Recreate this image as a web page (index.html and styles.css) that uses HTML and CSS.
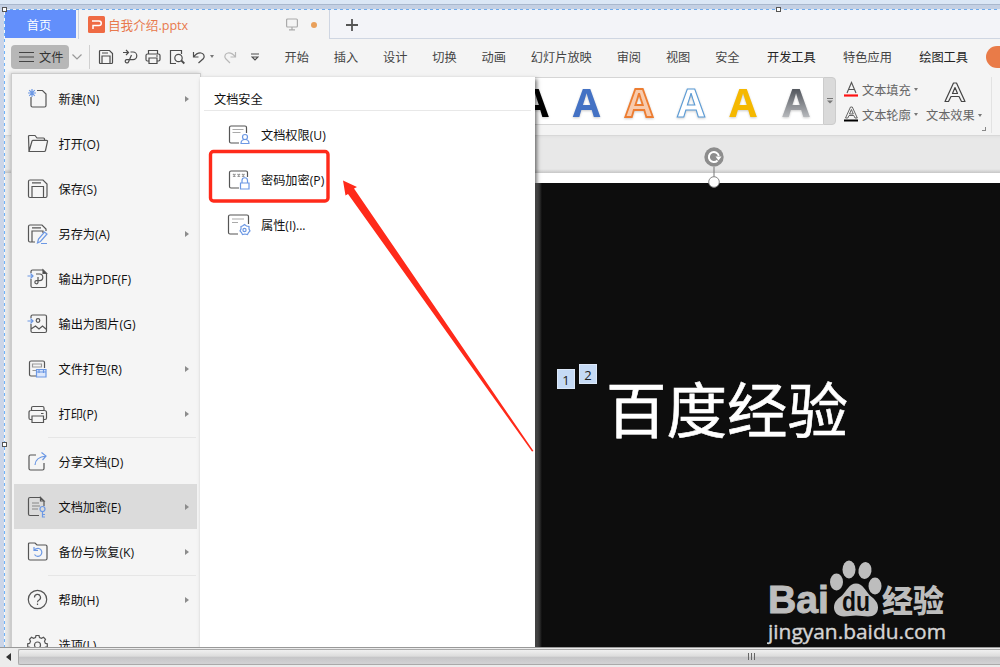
FILE: index.html
```
<!DOCTYPE html>
<html lang="zh-CN">
<head>
  <meta charset="utf-8">
  <title>自我介绍.pptx</title>
  <link rel="stylesheet" href="styles.css">
</head>
<body>

<div class="app">
  <div class="window">

    <div class="tabs">
      <div class="tab-home">首页</div>
      <div class="tab-doc">
        <svg class="logo" width="17" height="17" viewBox="0 0 17 17"><rect width="17" height="17" rx="1.5" fill="#ef6a43"/><path d="M4 5h7a2 2 0 0 1 0 4.500H5V13" fill="none" stroke="#fff" stroke-width="1.5"/></svg>
        <span class="name">自我介绍.pptx</span>
        <svg width="12" height="13" viewBox="0 0 12 13" fill="none" stroke="#aaa" stroke-width="1.2"><rect x=".6" y="1" width="10.8" height="8" rx="1"/><path d="M6 9v2.500M3 11.800h6"/></svg>
        <i class="dot"></i>
      </div>
      <div class="tab-new"><svg width="12" height="12" viewBox="0 0 12 12" stroke="#555" stroke-width="1.8"><path d="M6 0v12M0 6h12"/></svg></div>
    </div>

    <div class="toolbar">
      <div class="file-btn">
        <svg width="15" height="12" viewBox="0 0 15 12" stroke="#444" stroke-width="1.1"><path d="M0 1.500h15M0 6h15M0 10.500h15"/></svg>
        文件
      </div>
      <svg class="chev" width="10" height="6" viewBox="0 0 10 6" fill="none" stroke="#999" stroke-width="1.2"><path d="M.5.5L5 5 9.500.5"/></svg>
      <div class="quick">
        <svg width="16" height="16" viewBox="0 0 16 16"><path d="M1.500 2.500q0-1 1-1h9l3 3v9q0 1-1 1h-11q-1 0-1-1zM4 14V7h8v7M4 4h6"/></svg>
        <svg width="16" height="16" viewBox="0 0 16 16"><path d="M1 3.500h5.500M4 1l2.500 2.500L4 6M8.500 3h2.500a3.800 3.800 0 0 1 0 7.600H4.500a1.700 1.700 0 1 0 2 2.300L9.500 6"/></svg>
        <svg width="16" height="16" viewBox="0 0 16 16"><path d="M3.500 5V1.500h9V5M3.500 12H2.500q-1.500 0-1.500-1.500v-4Q1 5 2.500 5h11Q15 5 15 6.500v4q0 1.500-1.500 1.500h-1M4 9h8v5.500H4zM11 7h2"/></svg>
        <svg width="16" height="16" viewBox="0 0 16 16"><path d="M7 14.500H1.500v-13h11V5"/><circle cx="9.500" cy="9" r="3.700"/><path d="M12.300 11.500l3 3" stroke-width="1.800"/></svg>
        <svg width="14" height="14" viewBox="0 0 14 14"><path d="M1.500 2v5h5M1.500 7Q5 2.500 9 3a3.500 3.500 0 0 1 2.500 5.500L6.500 13"/></svg>
        <i class="caret"></i>
        <svg class="redo" width="14" height="14" viewBox="0 0 14 14"><path d="M12.500 2v5h-5M12.500 7Q9 2.500 5 3a3.500 3.500 0 0 0-2.500 5.500L7 13"/></svg>
        <svg class="more" width="8" height="8" viewBox="0 0 8 8"><path d="M0 1h8M1 4h6L4 7z"/></svg>
      </div>
      <div class="menus">
        <span>开始</span><span>插入</span><span>设计</span><span>切换</span><span>动画</span><span>幻灯片放映</span><span>审阅</span><span>视图</span><span>安全</span>
        <span class="strong wide">开发工具</span><span class="wide">特色应用</span><span class="strong wide">绘图工具</span>
      </div>
      <div class="pill"></div>
    </div>

    <div class="ribbon">
      <svg class="gallery" width="315" height="48" viewBox="0 0 315 48">
        <defs>
          <linearGradient id="gray" x1="0" y1="0" x2="0" y2="1"><stop offset=".3" stop-color="#555960"/><stop offset=".8" stop-color="#b8babd"/></linearGradient>
        </defs>
        <path d="M0 .5h315M0 47.500h315" stroke="#d5d5d5"/>
        <g class="art" text-anchor="middle">
          <text x="27" y="39.500" fill="#000">A</text>
          <text x="78.500" y="39.500" fill="#4472c4">A</text>
          <text x="131" y="39.500" fill="#f8cbad" stroke="#ed7d31" stroke-width="1.800">A</text>
          <text x="183" y="39.500" fill="#fff" stroke="#5b9bd5" stroke-width="1.100">A</text>
          <text x="235" y="39.500" fill="#f5b800">A</text>
          <text x="288" y="39.500" fill="url(#gray)">A</text>
        </g>
      </svg>
      <div class="gallery-more"><svg width="6" height="6" viewBox="0 0 6 6"><path d="M0 .5h6" stroke="#777"/><path d="M0 2.500h6L3 5.500z" fill="#777"/></svg></div>
      <div class="text-tools">
        <div class="tool">
          <svg width="15" height="17" viewBox="0 0 15 17"><path d="M3 12L7.500 1.500 12 12M4.500 8.500h6" fill="none" stroke="#555" stroke-width="1.100"/><path d="M0 14.500h14" stroke="#f11" stroke-width="2.200"/></svg>
          文本填充<i class="caret"></i>
        </div>
        <div class="tool">
          <svg width="15" height="17" viewBox="0 0 15 17"><path d="M1.500 12L6.500 1h1.800l5 11H11L9.800 9.500H5L3.800 12zM5.500 8L7.400 3.500 9.300 8z" fill="none" stroke="#555" stroke-width=".9"/><path d="M0 14.500h14" stroke="#000" stroke-width="2"/></svg>
          文本轮廓<i class="caret"></i>
        </div>
      </div>
      <div class="text-effect">
        <svg width="22" height="21" viewBox="0 0 22 21" fill="none" stroke="#444" stroke-width="1.200" stroke-linejoin="round"><path d="M1 19.500L9.500 1h3L21 19.500h-3.500L15 14.500H7L4.500 19.500zM8.500 11.500L11 5.500l2.500 6z"/></svg>
        <span>文本效果<i class="caret"></i></span>
        <i class="corner"></i>
      </div>
    </div>

    <div class="stage">
      <div class="slide">
        <span class="ph one">1</span>
        <span class="ph two">2</span>
        <div class="title">百度经验</div>
        <svg class="watermark" width="182" height="90" viewBox="0 0 182 90">
          <g fill="#bdbdbd">
            <text class="wm-bai" x="1" y="55.500" textLength="61" lengthAdjust="spacingAndGlyphs">Bai</text>
            <ellipse cx="69.500" cy="25" rx="6.500" ry="8.500"/>
            <ellipse cx="82" cy="12.500" rx="6.500" ry="9"/>
            <ellipse cx="98" cy="13.500" rx="6.500" ry="8.500" transform="rotate(10 98 13.500)"/>
            <ellipse cx="108" cy="29" rx="6.500" ry="8.500"/>
            <path d="M89 26.500c7 0 9 7 14 12 5 4 8 7 8 12 0 6-4 9-10 9-5 0-7-1-12-1s-7 1-12 1c-6 0-10-4-10-9 0-6 4-9 8-12 5-5 7-12 14-12z"/>
            <text class="wm-du" x="75" y="54" textLength="28" lengthAdjust="spacingAndGlyphs">du</text>
            <text class="wm-cn" x="115" y="55" textLength="62">经验</text>
            <text class="wm-url" x="1" y="81.500" textLength="178" lengthAdjust="spacingAndGlyphs">jingyan.baidu.com</text>
          </g>
        </svg>
      </div>
      <svg class="rotate" width="20" height="42" viewBox="0 0 20 42">
        <circle cx="10" cy="10" r="9.700" fill="#8d8d8d"/>
        <path d="M13.500 13.500a5 5 0 1 1 1.300-4.500" fill="none" stroke="#fff" stroke-width="2"/><path d="M11.500 9.500H17.500l-3 4z" fill="#fff"/>
        <path d="M10 20v10" stroke="#777"/>
        <circle cx="10" cy="35" r="5.300" fill="#fff" stroke="#888"/>
      </svg>
    </div>

    <div class="file-menu">
      <div class="item">
        <svg width="22" height="22" viewBox="0 0 22 22"><path d="M4 9v8.500q0 1.500 1.500 1.500h12q1.500 0 1.500-1.500V6l-3.500-3.500H10"/><path class="b" d="M5 1v8M1 5h8M2.200 2.200l5.600 5.600M7.800 2.200L2.200 7.800"/></svg>
        新建(N)<i class="arrow"></i>
      </div>
      <div class="item">
        <svg width="22" height="22" viewBox="0 0 22 22"><path d="M2 18.500L1.500 3.500q0-1 1-1H8l2 2.500h6.500q1 0 1 1V7.500M2 18.500L5 8q.300-.7 1-.7h13.500q1.300 0 1 1L18.500 17.500q-.300 1-1.300 1z"/></svg>
        打开(O)
      </div>
      <div class="item">
        <svg width="22" height="22" viewBox="0 0 22 22"><path d="M1.500 3.500q0-1.500 1.500-1.500h13l4 4v12q0 1.500-1.500 1.500H3q-1.500 0-1.500-1.500zM5 19.500V8.500h11.500v11M5 4.800h9"/></svg>
        保存(S)
      </div>
      <div class="item">
        <svg width="22" height="22" viewBox="0 0 22 22"><path d="M8 19H3q-1.500 0-1.500-1.500v-14Q1.500 2 3 2h12l4 4v2M5 19V8h11v2M5 4.800h9"/><path class="b" d="M10.500 20l1-4 6-7 2.500 2-6.500 7.500zM14 20.500h6"/></svg>
        另存为(A)<i class="arrow"></i>
      </div>
      <div class="item">
        <svg width="22" height="22" viewBox="0 0 22 22"><path d="M4 5V3.500Q4 2 5.500 2H16l3.500 3.500V18q0 1.500-1.500 1.500H5.500Q4 19.500 4 18v-7M9 6h3.500a3.300 3.300 0 0 1 0 6.600H9.500a1.600 1.600 0 1 0 1.500 2V9"/><path class="b" d="M.5 8h5M3.500 5.500L6 8l-2.500 2.500"/><path d="M16 2l3.500 3.500H16z" fill="#444"/></svg>
        输出为PDF(F)
      </div>
      <div class="item">
        <svg width="22" height="22" viewBox="0 0 22 22"><path d="M4 5V3.500Q4 2 5.500 2H18q1.500 0 1.500 1.500V18q0 1.500-1.500 1.500H5.500Q4 19.500 4 18v-7M4 16l4.500-3 3.500 3 3.500-3 4 3.500"/><circle cx="11" cy="7.500" r="1.800"/><path class="b" d="M.5 8h5M3.500 5.500L6 8l-2.500 2.500"/></svg>
        输出为图片(G)
      </div>
      <div class="item">
        <svg width="22" height="22" viewBox="0 0 22 22"><path d="M9 18H4q-1.500 0-1.500-1.500v-12Q2.500 3 4 3h12q1.500 0 1.500 1.500V10"/><path d="M5.500 6h9v3h-9zM5.500 12.500H9" stroke="#999"/><path class="b" d="M9.500 11.500h9.500v7.500h-9.500zM9.500 14h9.500M12 11.500V15M16.500 11.500V15" fill="#dce7fb"/></svg>
        文件打包(R)<i class="arrow"></i>
      </div>
      <div class="item">
        <svg width="22" height="22" viewBox="0 0 22 22"><path d="M4.500 7.500V5q0-1.500 1.500-1.500h9.500Q17 3.500 17 5v2.500M5 16.500H3.500q-1.500 0-1.500-1.500V9.500Q2 7.500 4 7.500h13.500q2 0 2 2V15q0 1.500-1.500 1.500h-1.500M5 13h11.500v6.500H5zM14 10.500h2.500"/></svg>
        打印(P)<i class="arrow"></i>
      </div>
      <hr>
      <div class="item">
        <svg width="22" height="22" viewBox="0 0 22 22"><path d="M9 4H3.500Q2 4 2 5.500v12Q2 19 3.500 19h12q1.500 0 1.500-1.500V12"/><path class="b" d="M8 14Q8.500 6 19 5M14.500 1.500L19 5l-3.500 4"/></svg>
        分享文档(D)
      </div>
      <div class="item on">
        <svg width="22" height="22" viewBox="0 0 22 22"><path d="M12 19.500H3q-1.500 0-1.500-1.500V3Q1.500 1.500 3 1.500h10.500L17 5v5M13.500 1.500V5H17z"/><path d="M5 7h7M5 10h8M5 13h6" stroke="#888"/><path class="b" d="M15.500 15.500V21h2.500M15.500 18.500H18"/><circle class="b" cx="15.500" cy="13" r="2.500"/></svg>
        文档加密(E)<i class="arrow"></i>
      </div>
      <div class="item">
        <svg width="22" height="22" viewBox="0 0 22 22"><path d="M1.500 3q0-1 1-1H8l2 2h8.500Q20 4 20 5.500v12q0 1.500-1.500 1.500H3q-1.500 0-1.500-1.500z"/><path class="b" d="M7 6v3.500h4M7 9.500Q9 7 12 7.500a4 4 0 1 1-4.500 6"/></svg>
        备份与恢复(K)<i class="arrow"></i>
      </div>
      <hr>
      <div class="item">
        <svg width="22" height="22" viewBox="0 0 22 22"><circle cx="10.500" cy="10.500" r="9.200"/><path d="M7.500 8.500a3 3 0 1 1 4.500 2.500q-1.500.8-1.500 2.200M10.500 14.500v1.500"/></svg>
        帮助(H)<i class="arrow"></i>
      </div>
      <div class="item">
        <svg width="22" height="22" viewBox="0 0 22 22"><path d="M8.500 3.500L9 1.500h3l.5 2 2 .8 2-1 2 2-1 2 .8 2 2 .5v3l-2 .5-.8 2 1 2-2 2-2-1-2 .8-.5 2H9l-.5-2-2-.8-2 1-2-2 1-2-.8-2-2-.5v-3l2-.5.8-2-1-2 2-2 2 1z"/><circle cx="10.500" cy="11" r="3"/></svg>
        选项(L)
      </div>
    </div>

    <div class="sub-menu">
      <div class="head">文档安全</div>
      <div class="sub-item">
        <svg width="22" height="22" viewBox="0 0 22 22"><path d="M11 19H3q-1.500 0-1.500-1.500v-14Q1.500 2 3 2h14q1.500 0 1.500 1.500V9"/><path d="M4.500 5.500h11M4.500 8.500h8" stroke="#aaa"/><path class="b" d="M13 19.500q0-4 4-4t4 4z"/><circle class="b" cx="17" cy="13" r="2.500"/></svg>
        文档权限(U)
      </div>
      <div class="sub-item">
        <svg width="22" height="22" viewBox="0 0 22 22"><path d="M11 19H3q-1.500 0-1.500-1.500v-14Q1.500 2 3 2h15q1.500 0 1.500 1.500V8"/><path d="M5 5l2.500 2.500M7.500 5L5 7.500M9.500 5L12 7.500M12 5L9.500 7.500M14 5l2.500 2.500M16.500 5L14 7.500" stroke="#999"/><path class="b" d="M12.500 14h8.500v6h-8.500zM14 14v-2.500a2.700 2.700 0 0 1 5.500 0V14"/></svg>
        密码加密(P)
      </div>
      <div class="sub-item">
        <svg width="24" height="24" viewBox="0 0 24 24"><path d="M11 21H3q-1.500 0-1.500-1.500v-16Q1.500 2 3 2h17q1.500 0 1.500 1.500V11"/><path d="M5 6h12M5 9.500h6" stroke="#aaa"/><path class="b" d="M15.500 13l2-1.500 2 1.500 2.500.5v2.500l1 2-1.500 1.500-1 2-2.500-.5-2.500.5-1-2-1.500-1.500 1-2v-2.500z"/><circle class="b" cx="17.500" cy="17" r="1.600"/></svg>
        属性(I)...
      </div>
    </div>

    <svg class="marks" width="330" height="320" viewBox="0 0 330 320">
      <rect x="4.500" y="4.500" width="117.500" height="49.500" rx="3" fill="none" stroke="#ff2a1a" stroke-width="3.400"/>
      <path d="M137 33.500L151 40l-3 1.500L327.500 304l-1.500.5L142 47l-2.500 1.500z" fill="#ff2a1a"/>
    </svg>
  </div>

  <div class="scrollbar">
    <div class="sb-left"><svg width="5" height="8" viewBox="0 0 5 8"><path d="M5 0v8L0 4z" fill="#333"/></svg></div>
    <div class="sb-thumb"><i></i><i></i><i></i></div>
  </div>

  <i class="handle tl"></i>
  <i class="handle tc"></i>
  <i class="handle ml"></i>
</div>

</body>
</html>
```

FILE: styles.css
```
* {
  box-sizing: border-box;
}
body {
  margin: 0;
  font-family: "Open Sans", "Noto Sans CJK SC", sans-serif;
  font-size: 12.2px;
  color: #444;
  white-space: nowrap;
}
svg {
  flex: none;
  display: block;
}
.app {
  position: relative;
  display: flex;
  flex-direction: column;
  width: 1000px;
  height: 667px;
  overflow: hidden;
  padding: 9px 0 0 4px;
  background: linear-gradient(#dbe7f5 4px, #a9b8cd 4px, #a9b8cd 5px, #c4d0e3 5px, #c4d0e3 9px, #cbd5e8 9px);
}
.window {
  position: relative;
  display: flex;
  flex-direction: column;
  height: 638px;
  padding: 1px 0 0 1px;
  background:
    repeating-linear-gradient(90deg, #6eabed 0 3px, #e5effa 3px 6px) 0 0 / 100% 1px no-repeat,
    repeating-linear-gradient(#6eb2f8 0 3px, #f4f8fc 3px 6px) 0 0 / 1px 100% no-repeat,
    #f4f4f4;
  overflow: hidden;
}

/* tabs */
.tabs {
  display: flex;
  height: 29px;
  background: #f4f4f4;
}
.tab-home {
  width: 71px;
  height: 28px;
  padding-right: 3px;
  line-height: 31px;
  text-align: center;
  color: #fff;
  background: #628ffb;
}
.tab-doc {
  display: flex;
  align-items: center;
  width: 251px;
  margin-left: 2px;
  padding: 0 0 0 9px;
  border-left: 1px solid #ccd3df;
  color: #e8794d;
  font-size: 12.6px;
}
.tab-doc .name {
  width: 178px;
  margin-left: 3px;
}
.dot {
  width: 6px;
  height: 6px;
  margin-left: 13px;
  border-radius: 50%;
  background: #e9a05a;
}
.tab-new {
  flex: 1;
  padding: 9px 0 0 16px;
  border-left: 1px solid #cfd6e2;
  border-bottom: 1px solid #cfd6e2;
  background: #f3f4f8;
}

/* toolbar */
.toolbar {
  display: flex;
  align-items: center;
  height: 38px;
  padding: 0 0 3px 6px;
}
.toolbar > * {
  flex: none;
}
.file-btn {
  display: flex;
  align-items: center;
  gap: 5px;
  width: 58px;
  height: 24px;
  padding-left: 8px;
  border-radius: 4px;
  background: #b7b7b7;
  color: #333;
}
.chev {
  margin-left: 3px;
}
.quick {
  display: flex;
  align-items: center;
  width: 195.5px;
  height: 24px;
  margin-left: 7px;
  padding-left: 8px;
  border-left: 1px solid #d0d0d0;
}
.quick svg {
  margin-right: 7.5px;
  fill: none;
  stroke: #4c4c4c;
  stroke-width: 1.2;
}
.quick .caret {
  margin: 0 9px 0 -4px;
}
.quick svg.redo {
  stroke: #b8b8b8;
  margin-right: 14px;
}
.caret {
  display: inline-block;
  border: 2.5px solid transparent;
  border-top: 3px solid #777;
  border-bottom: 0;
}
.menus {
  display: flex;
  gap: 24.9px;
}
.menus .wide {
  margin-left: 2.5px;
}
.strong {
  color: #222;
}
.pill {
  width: 60px;
  height: 22px;
  margin-left: 18px;
  border-radius: 11px;
  background: #e97b48;
}

/* ribbon */
.ribbon {
  display: flex;
  height: 59px;
  padding-left: 503px;
  border-bottom: 1px solid #d8d8d8;
  color: #666;
}
.gallery {
  background: #fff;
}
.art {
  font-family: "Open Sans", sans-serif;
  font-weight: 700;
  font-size: 40px;
  filter: drop-shadow(0 1px 1px #0003);
}
.gallery-more {
  display: flex;
  align-items: center;
  justify-content: center;
  width: 13px;
  height: 48px;
  border: 1px solid #ccc;
  border-radius: 0 4px 4px 0;
  background: #dadada;
}
.text-tools {
  width: 80px;
  margin-left: 8px;
}
.tool {
  display: flex;
  align-items: center;
  height: 25px;
}
.tool svg {
  margin-right: 3px;
}
.tool .caret {
  margin-left: 3px;
}
.text-effect {
  position: relative;
  width: 68px;
  height: 56px;
  padding: 5px 0 0 2px;
  border-right: 1px solid #e2e2e2;
}
.text-effect svg {
  margin-left: 18px;
}
.text-effect span {
  display: flex;
  align-items: center;
  gap: 3px;
  margin-top: 3px;
}
.corner {
  position: absolute;
  right: 5px;
  bottom: 2px;
  width: 4px;
  height: 4px;
  border-right: 1px solid #888;
  border-bottom: 1px solid #888;
}

/* slide */
.stage {
  position: relative;
  flex: 1;
  padding: 37px 0 0 530px;
  background: linear-gradient(#e2e2e2 0, #e8e8e8 3px, #e8e8e8 33px, #c6c6c6 37px, #e8e8e8 37px);
}
.slide {
  position: relative;
  height: 474px;
  border-top: 10px solid #fff;
  background: linear-gradient(90deg, #777, #0d0d0d 7px);
}
.ph {
  position: absolute;
  width: 18px;
  height: 20px;
  line-height: 21px;
  text-align: center;
  color: #222;
  font-size: 13px;
  background: #c5daf5;
  border: 1px solid #dce8f8;
}
.one {
  left: 22px;
  top: 186px;
}
.two {
  left: 44px;
  top: 181px;
}
.title {
  position: absolute;
  left: 71px;
  top: 179px;
  font-size: 60.5px;
  font-weight: 400;
  font-family: "Noto Sans CJK SC", sans-serif;
  line-height: 90px;
  color: #fff;
  -webkit-text-stroke: .6px #fff;
}
.watermark {
  position: absolute;
  left: 232px;
  top: 374px;
}
.wm-bai {
  font: 700 39px "Liberation Sans", sans-serif;
  stroke: #bdbdbd;
  stroke-width: 1px;
}
.wm-du {
  font: 700 27px "Liberation Sans", sans-serif;
  fill: #0d0d0d;
}
.wm-cn {
  font: 900 31px "Noto Sans CJK SC", sans-serif;
}
.wm-url {
  font: 20px "Open Sans", sans-serif;
  fill: #d4d4d4;
  stroke: #d4d4d4;
  stroke-width: .4px;
}
.rotate {
  position: absolute;
  left: 699px;
  top: 11px;
}

/* file menu */
.file-menu {
  position: absolute;
  left: 7px;
  top: 64px;
  width: 190px;
  height: 590px;
  padding: 2px 3px 0 2px;
  border: 1px solid #ccc;
  background: #f5f5f5;
  box-shadow: -1px 0 4px #0003;
  color: #111;
}
.item {
  display: flex;
  align-items: center;
  height: 45px;
  padding: 0 8px 0 13px;
}
.item svg,
.sub-item svg {
  fill: none;
  stroke: #555;
  stroke-width: 1.2;
}
.item svg {
  margin-right: 9.5px;
}
.item .b,
.sub-item .b {
  stroke: #6c98e4;
}
.on {
  background: #dbdbdb;
}
.arrow {
  margin-left: auto;
  border: 3.5px solid transparent;
  border-left: 4px solid #8c8c8c;
  border-right: 0;
}
.file-menu hr {
  height: 1px;
  margin: 1px 1px 1px 34px;
  border: 0;
  background: #e6e6e6;
}
.sub-menu {
  position: absolute;
  left: 196px;
  top: 68px;
  width: 335px;
  height: 590px;
  background: #fff;
  box-shadow: 2px 2px 4px #0008;
  color: #111;
}
.head {
  height: 34px;
  line-height: 45px;
  margin: 0 4px 1px;
  padding-left: 10px;
  border-bottom: 1px solid #e8e8e8;
}
.sub-item {
  display: flex;
  align-items: center;
  height: 45px;
  padding-left: 27px;
}
.sub-item svg {
  width: 24px;
  margin-right: 10px;
}

/* red highlight and pointer */
.marks {
  position: absolute;
  left: 202px;
  top: 138px;
}

/* scrollbar */
.scrollbar {
  display: flex;
  height: 20px;
  margin-left: -4px;
  padding: 1px 0 2px;
  border-top: 1px solid #999;
  background: #ececec;
}
.sb-left {
  display: flex;
  align-items: center;
  justify-content: center;
  width: 18px;
  padding-right: 2px;
}
.sb-thumb {
  flex: 1;
  display: flex;
  gap: 2px;
  padding: 3px 0 0 729px;
  border: 1px solid #aaa;
  border-right: 0;
  border-radius: 2px 0 0 2px;
  background: linear-gradient(#f0f0f0, #dcdcdc 45%, #c5c5c7 50%, #d2d2d4);
}
.sb-thumb i {
  width: 1px;
  height: 7px;
  background: #666;
}

/* selection handles */
.handle {
  position: absolute;
  width: 5px;
  height: 5px;
  border: 1px solid #555;
  background: #fff;
}
.tl {
  left: 2px;
  top: 7px;
}
.tc {
  left: 776px;
  top: 7px;
}
.ml {
  left: 2px;
  top: 442px;
}
```
